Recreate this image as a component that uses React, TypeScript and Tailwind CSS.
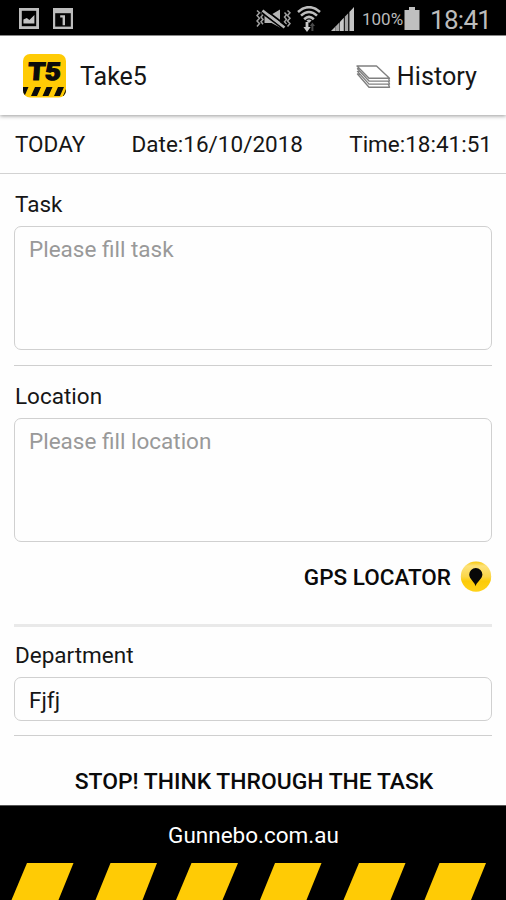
import { useState } from 'react'

const stripes = [
  '27,0 73.5,0 58.5,37 11.5,37',
  '110.5,0 157,0 142.5,37 95.5,37',
  '191.5,0 238,0 222.5,37 176,37',
  '275,0 321.5,0 306.5,37 260,37',
  '359,0 405.5,0 390.5,37 343.5,37',
  '439.5,0 486,0 471,37 424.5,37',
]

function StatusBar() {
  return (
    <div className="flex h-[35px] shrink-0 items-center bg-black">
      {/* Notifications */}
      <svg className="ml-[19px] mt-0.5 h-[21px] w-5" viewBox="0 0 20 21">
        <rect x="1.4" y="1.4" width="17.2" height="18.2" fill="none" stroke="#bdbdbd" strokeWidth="2.8" />
        <path d="M4.4 15.6v-4.2l3.4-1.4 2.6 2 5-5v8.6z" fill="#c2c2c2" />
      </svg>
      <svg className="ml-3.5 mt-0.5 h-[21px] w-5" viewBox="0 0 20 21">
        <path d="M0 0h20v21H0z" fill="#bdbdbd" />
        <path d="M2.2 5.2h15.6v13.4H2.2z" fill="#050505" />
        <path d="M7.2 8.4h3.6v8.8" fill="none" stroke="#c2c2c2" strokeWidth="2.4" />
      </svg>

      {/* Vibrate, wifi, signal, battery */}
      <svg className="ml-[183px] mt-0.5 h-[20px] w-[35px]" viewBox="0 0 35 20">
        <g fill="none" stroke="#a0a0a0" strokeWidth="1.5">
          <path d="M1 1.5l2.5 2.3L1 6.5l2.5 2.7L1 12l2.5 2.6L1 17.5" />
          <path d="M5 3.5l2 2.2-2 2.3 2 2.4-2 2.4 2 2.4" />
          <path d="M31.5 1.5L34 3.8l-2.5 2.7L34 9.2 31.5 12l2.5 2.6-2.5 2.9" />
          <path d="M28.5 3.5l2 2.2-2 2.3 2 2.4-2 2.4 2 2.4" />
        </g>
        <path d="M8.5 5.5h7l8.5-5v18l-8.5-4.5h-7z" fill="#b5b5b5" />
        <path d="M5.5 3.5l22 16.5M9 .5l21 16" stroke="#000" strokeWidth="1.8" />
        <path d="M6.5 1.5l22 17" stroke="#b5b5b5" strokeWidth="2.6" />
      </svg>
      <svg className="ml-[6px] mt-0.5 h-[26px] w-6" viewBox="0 0 24 26">
        <g fill="none" stroke="#bdbdbd" strokeWidth="2.6">
          <path d="M1 6Q12-3.6 23 6" />
          <path d="M4 9.6Q12 2.4 20 9.6" />
          <path d="M7.2 13.2Q12 8.6 16.8 13.2" />
        </g>
        <path d="M9.4 14.5Q12 12.6 14.6 14.5L12 17z" fill="#bdbdbd" />
        <path d="M8.6 16h2.8v5h2.3L10 26l-3.6-5h2.2z" fill="#c9c9c9" />
        <path d="M14.4 25v-5h-1.6l2.6-3.5 2.6 3.5h-1.6v5z" fill="#4a4a4a" />
      </svg>
      <svg className="ml-2.5 mt-0.5 h-6 w-[23px]" viewBox="0 0 23 24">
        <path d="M0 24l4.5-4.5V24z" fill="#bdbdbd" />
        <path d="M4.5 19.5l4-4.2V24h-4z" fill="#a5a5a5" />
        <path d="M9 14.8l3.8-4V24H9z" fill="#cacaca" />
        <path d="M13.8 9.8l3.4-3.5V24h-3.4z" fill="#a5a5a5" />
        <path d="M18.4 5L23 0v24h-4.6z" fill="#c4c4c4" />
      </svg>
      <span className="ml-2 mt-1 w-[42px] whitespace-nowrap text-[17px] leading-none text-[#b9b9b9]">
        100%
      </span>
      <svg className="mt-0.5 h-[23px] w-4" viewBox="0 0 16 23">
        <path d="M5 0h6v3h4.5v20H.5V3H5z" fill="#bfbfbf" />
      </svg>
      <span className="ml-[10px] mt-1 text-[26px] leading-none tracking-[-0.7px] text-[#bcbcbc]">18:41</span>
    </div>
  )
}

function Logo() {
  return (
    <svg className="h-11 w-[43px]" viewBox="0 0 43 44">
      <defs>
        <clipPath id="badge">
          <rect width="43" height="43.5" rx="7" />
        </clipPath>
      </defs>
      <g clipPath="url(#badge)">
        <rect width="43" height="44" fill="#ffcb05" />
        <path
          d="M0 33h5.5L2 41H0zM12 33h6L14 42H8zM23.5 33h6L25.5 42h-6zM35 33h6L37 42h-6zM43 35v7h-3z"
          fill="#0b0b0b"
        />
      </g>
      <text
        x="3"
        y="25.8"
        textLength="33"
        lengthAdjust="spacingAndGlyphs"
        transform="translate(3.2 0) skewX(-4)"
        fontSize="24.5"
        fontWeight="900"
        fill="#0b0b0b"
        stroke="#0b0b0b"
        strokeWidth="1.2"
      >
        T5
      </text>
    </svg>
  )
}

function HistoryIcon() {
  return (
    <svg className="h-6 w-[35px]" viewBox="0 0 35 24">
      <g fill="#fff" stroke="#808080" strokeWidth="1.4" strokeLinejoin="round">
        <path d="M1.5 9l11.5 13.2h20.5l-1-3-14-10z" />
        <path d="M1.5 6.4l11.5 12.7h20.5l-1-3-14-10z" />
        <path d="M1.5 3.7l11.5 12.4h20.5l-1-3-14-10z" />
        <path d="M1 1h19.5L33.5 13.2H13z" />
      </g>
    </svg>
  )
}

export default function App() {
  const [task, setTask] = useState('')
  const [location, setLocation] = useState('')
  const [department, setDepartment] = useState('Fjfj')

  return (
    <div className="flex h-[900px] w-[506px] flex-col overflow-hidden bg-[#fefefe] font-['Roboto',sans-serif] text-[22.5px] leading-7 text-[#161616]">
      <StatusBar />

      {/* Header */}
      <header className="flex h-20 shrink-0 items-center border-t border-[#888] bg-white pl-[23px] pr-[29px] shadow-[0_1px_4px_rgba(0,0,0,0.4)]">
        <Logo />
        <h1 className="ml-3.5 mt-0.5 text-[25px]">Take5</h1>
        <button className="ml-auto mt-0.5 flex items-center gap-[6px] text-[25.2px]">
          <HistoryIcon />
          History
        </button>
      </header>

      {/* Date row */}
      <div className="flex h-[59px] shrink-0 items-center justify-between border-b border-[#d2d2d2] pl-[15px] pr-3.5">
        <span>TODAY</span>
        <span>Date:16/10/2018</span>
        <span>Time:18:41:51</span>
      </div>

      <main className="flex flex-1 flex-col px-3.5">
        <label htmlFor="task" className="ml-px mt-4">Task</label>
        <textarea
          id="task"
          value={task}
          onChange={(e) => setTask(e.target.value)}
          placeholder="Please fill task"
          className="mt-2 h-[124px] shrink-0 resize-none rounded-[7px] border-[1.5px] border-[#d0d0d0] px-3.5 py-2 placeholder:text-[#999] focus:outline-none"
        />

        <hr className="mt-[15px] border-[#cfcfcf]" />
        <label htmlFor="location" className="ml-px mt-4">Location</label>
        <textarea
          id="location"
          value={location}
          onChange={(e) => setLocation(e.target.value)}
          placeholder="Please fill location"
          className="mt-2 h-[124px] shrink-0 resize-none rounded-[7px] border-[1.5px] border-[#d0d0d0] px-3.5 py-2 placeholder:text-[#999] focus:outline-none"
        />

        <button className="mt-[19px] flex items-center gap-[9px] self-end font-medium text-[#0a0a0a]">
          GPS LOCATOR
          <svg className="h-8 w-8" viewBox="0 0 32 32">
            <defs>
              <linearGradient id="gps" x1="0" y1="0" x2="0" y2="1">
                <stop offset="0" stopColor="#f8c808" />
                <stop offset="0.15" stopColor="#fde27a" />
                <stop offset="0.5" stopColor="#fbd64a" />
                <stop offset="0.65" stopColor="#fccb08" />
                <stop offset="1" stopColor="#ffd21a" />
              </linearGradient>
            </defs>
            <circle cx="16" cy="15.6" r="15.2" fill="url(#gps)" />
            <path d="M15.6 25.2c-.8-3.8-6.4-7.2-6.4-11.6a6.6 6.6 0 0 1 13.2 0c0 4.4-6 7.8-6.8 11.6z" fill="#080808" />
          </svg>
        </button>

        <hr className="mt-[31px] border-t-[3px] border-[#e9e9e9]" />
        <label htmlFor="department" className="ml-px mt-3.5">Department</label>
        <input
          id="department"
          value={department}
          onChange={(e) => setDepartment(e.target.value)}
          className="mt-2 h-11 shrink-0 rounded-[7px] border-[1.5px] border-[#d0d0d0] px-3.5 pt-0.5 focus:outline-none"
        />
        <hr className="mt-3.5 border-[#cfcfcf]" />
        <h2 className="ml-0.5 mt-8 text-center text-[22.9px] font-medium text-[#0a0a0a]">STOP! THINK THROUGH THE TASK</h2>
      </main>

      {/* Footer */}
      <footer className="flex h-[95px] shrink-0 flex-col justify-between border-t border-[#555] bg-black text-center text-white">
        <p className="ml-px mt-[15px]">Gunnebo.com.au</p>
        <svg className="h-[37px] w-full" viewBox="0 0 506 37">
          {stripes.map((points) => (
            <polygon key={points} points={points} fill="#ffcb05" />
          ))}
        </svg>
      </footer>
    </div>
  )
}
